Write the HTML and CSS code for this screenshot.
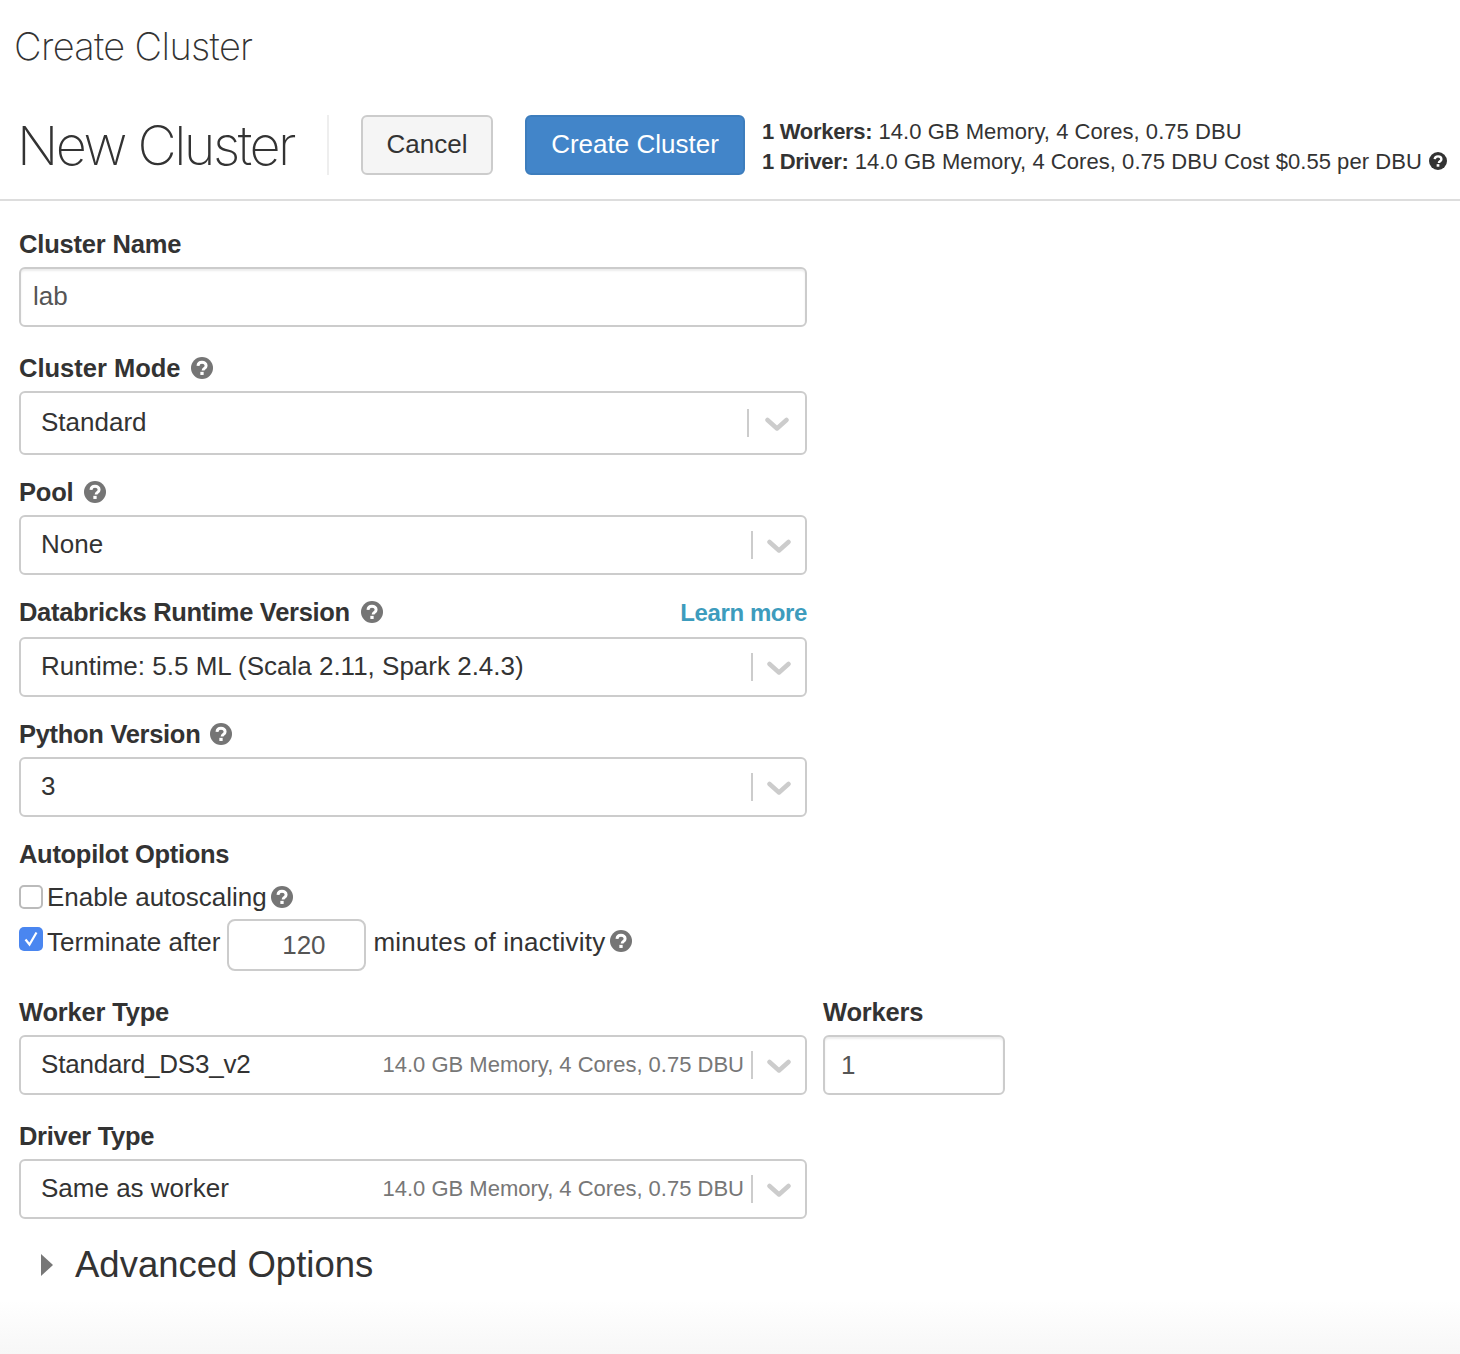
FILE: index.html
```html
<!DOCTYPE html>
<html lang="en">
<head>
  <meta charset="UTF-8" />
  <title>Create Cluster</title>
  <link rel="stylesheet" href="styles.css">
</head>
<body>
  <svg class="defs" width="0" height="0">
    <symbol id="help" viewBox="0 0 24 24">
      <circle cx="12" cy="12" r="12" fill="currentColor"/>
      <path d="M7.600 9.600c.2-2.400 2.100-3.800 4.400-3.800 2.500 0 4.500 1.500 4.500 3.700 0 3-3.300 2.800-3.300 5.100" fill="none" stroke="#fff" stroke-width="3.200"/>
      <rect x="10.200" y="16.200" width="3.600" height="3.400" fill="#fff"/>
    </symbol>
    <symbol id="chevron" viewBox="0 0 24 14">
      <path d="M2.500 3l9.500 8.500 9.500-8.500" fill="none" stroke="currentColor" stroke-width="4.500" stroke-linecap="round" stroke-linejoin="round"/>
    </symbol>
  </svg>

  <div class="page-title">Create Cluster</div>

  <div class="cluster-header">
    <h1>New Cluster</h1>
    <div class="divider"></div>
    <button class="btn">Cancel</button>
    <button class="btn btn-primary">Create Cluster</button>
    <div class="summary">
      <div><b>1 Workers:</b> 14.0 GB Memory, 4 Cores, 0.75 DBU</div>
      <div><b>1 Driver:</b> 14.0 GB Memory, 4 Cores, 0.75 DBU Cost $0.55 per DBU <svg class="help help-dark"><use href="#help"/></svg></div>
    </div>
  </div>

  <form class="cluster-form">
    <div class="field field-name">
      <label>Cluster Name</label>
      <input class="text-input" type="text" value="lab" />
    </div>

    <div class="field">
      <label class="label-wide">Cluster Mode <svg class="help help-closer"><use href="#help"/></svg></label>
      <div class="select select-tall">
        <span class="select-value">Standard</span>
        <span class="select-sep"></span>
        <svg class="chevron"><use href="#chevron"/></svg>
      </div>
    </div>

    <div class="field">
      <label>Pool <svg class="help help-near"><use href="#help"/></svg></label>
      <div class="select">
        <span class="select-value">None</span>
        <span class="select-sep"></span>
        <svg class="chevron"><use href="#chevron"/></svg>
      </div>
    </div>

    <div class="field">
      <div class="label-row">
        <label class="label-tight">Databricks Runtime Version <svg class="help help-near"><use href="#help"/></svg></label>
        <a class="learn-more" href="#">Learn more</a>
      </div>
      <div class="select">
        <span class="select-value">Runtime: 5.5 ML (Scala 2.11, Spark 2.4.3)</span>
        <span class="select-sep"></span>
        <svg class="chevron"><use href="#chevron"/></svg>
      </div>
    </div>

    <div class="field">
      <label class="label-tight">Python Version <svg class="help help-closer"><use href="#help"/></svg></label>
      <div class="select">
        <span class="select-value">3</span>
        <span class="select-sep"></span>
        <svg class="chevron"><use href="#chevron"/></svg>
      </div>
    </div>

    <div class="autopilot">
      <label class="label-tight">Autopilot Options</label>
      <div class="check-row">
        <span class="checkbox"></span>
        <span>Enable autoscaling</span>
        <svg class="help"><use href="#help"/></svg>
      </div>
      <div class="check-row check-row-terminate">
        <span class="checkbox checkbox-on">
          <svg viewBox="0 0 24 24"><path d="M6.500 12.500l4 5 7-12" fill="none" stroke="#fff" stroke-width="2.200"/></svg>
        </span>
        <span class="terminate-text">Terminate after</span>
        <input class="minutes-input" type="text" value="120" />
        <span class="terminate-text inactivity-text">minutes of inactivity</span>
        <svg class="help"><use href="#help"/></svg>
      </div>
    </div>

    <div class="worker-row">
      <div class="field worker-type">
        <label>Worker Type</label>
        <div class="select">
          <span class="select-value select-value-tight">Standard_DS3_v2</span>
          <span class="select-note">14.0 GB Memory, 4 Cores, 0.75 DBU</span>
          <span class="select-sep"></span>
          <svg class="chevron"><use href="#chevron"/></svg>
        </div>
      </div>
      <div class="field worker-count">
        <label>Workers</label>
        <input class="text-input workers-input" type="text" value="1" />
      </div>
    </div>

    <div class="field driver-field">
      <label class="label-tight">Driver Type</label>
      <div class="select">
        <span class="select-value">Same as worker</span>
        <span class="select-note">14.0 GB Memory, 4 Cores, 0.75 DBU</span>
        <span class="select-sep"></span>
        <svg class="chevron"><use href="#chevron"/></svg>
      </div>
    </div>

    <div class="advanced">
      <span class="caret"></span>
      <span>Advanced Options</span>
    </div>
  </form>

  <div class="page-fade"></div>
</body>
</html>
```

FILE: styles.css
```css
* {
  box-sizing: border-box;
}

body {
  margin: 0;
  height: 1354px;
  overflow: hidden;
  background: #fff;
  color: #333;
  font-family: "Liberation Sans", Arial, sans-serif;
  font-size: 26px;
}

.defs {
  position: absolute;
}

.page-title {
  height: 115px;
  padding: 21px 0 0 14px;
  font-family: Inter, sans-serif;
  font-size: 38px;
  font-weight: 200;
  line-height: 50px;
  letter-spacing: -0.650px;
}

.cluster-header {
  display: flex;
  height: 86px;
  padding-left: 19px;
  border-bottom: 2px solid #ddd;
}

h1 {
  width: 308px;
  height: 60px;
  margin: 0;
  font-family: Inter, sans-serif;
  font-size: 54px;
  font-weight: 200;
  line-height: 62px;
  letter-spacing: -2.500px;
  text-indent: -2px;
}

.divider {
  width: 2px;
  height: 60px;
  background: #eee;
  margin-right: 32px;
}

.btn {
  width: 132px;
  height: 60px;
  margin-right: 32px;
  border: 2px solid #ccc;
  border-radius: 6px;
  background: #f5f5f5;
  color: #333;
  font-family: inherit;
  font-size: 26px;
  padding: 0 0 2px;
}

.btn-primary {
  width: 220px;
  margin-right: 17px;
  border-color: #3d7dbd;
  background: #4285c9;
  color: #fff;
}

.summary {
  font-size: 22px;
  line-height: 30px;
  letter-spacing: 0.050px;
  white-space: nowrap;
  margin-top: 2px;
}

.summary b {
  letter-spacing: -0.300px;
}

.cluster-form {
  padding: 28px 0 0 19px;
  width: 807px;
}

.field {
  margin-bottom: 22px;
}

.field-name {
  margin-bottom: 26px;
}

label {
  display: block;
  height: 30px;
  line-height: 30px;
  margin-bottom: 8px;
  font-weight: 700;
  font-size: 25.500px;
  letter-spacing: -0.180px;
  white-space: nowrap;
}

.label-wide {
  letter-spacing: 0;
}

.label-tight {
  letter-spacing: -0.300px;
}

.help {
  display: inline-block;
  width: 22px;
  height: 22px;
  margin-left: 5px;
  vertical-align: -2px;
  color: #757575;
}

.help-near {
  margin-left: 4px;
}

.help-closer {
  margin-left: 3px;
}

.help-dark {
  width: 18px;
  height: 18px;
  margin-left: 1px;
  vertical-align: -1px;
  color: #333;
}

.text-input {
  display: block;
  width: 100%;
  height: 60px;
  padding: 0 12px 2px;
  border: 2px solid #ccc;
  border-radius: 6px;
  box-shadow: inset 0 2px 2px rgba(0, 0, 0, 0.075);
  color: #555;
  font-family: inherit;
  font-size: 26px;
}

.select {
  display: flex;
  align-items: center;
  height: 60px;
  padding: 0 14px 0 20px;
  border: 2px solid #ccc;
  border-radius: 6px;
}

.select-tall {
  height: 64px;
  padding-right: 16px;
}

.select-tall .chevron {
  margin-left: 16px;
}

.select-value {
  flex: 1;
  margin-bottom: 2px;
  white-space: nowrap;
}

.select-value-tight {
  letter-spacing: -0.200px;
}

.select-note {
  margin-right: 7px;
  color: #777;
  font-size: 22px;
  white-space: nowrap;
}

.select-sep {
  width: 2px;
  height: 28px;
  background: #ccc;
}

.chevron {
  width: 24px;
  height: 14px;
  margin-left: 14px;
  margin-top: 1px;
  color: #ccc;
}

.label-row {
  display: flex;
  justify-content: space-between;
  height: 40px;
}

.learn-more {
  margin-top: 1px;
  color: #3d9cbd;
  font-size: 24px;
  font-weight: 700;
  line-height: 30px;
  letter-spacing: -0.400px;
  text-decoration: none;
}

.autopilot label {
  margin-bottom: 13px;
}

.check-row {
  display: flex;
  align-items: center;
  height: 30px;
  white-space: nowrap;
}

.check-row .help {
  margin-left: 4px;
}

.check-row-terminate {
  height: 52px;
  margin-top: 7px;
}

.check-row-terminate .help {
  margin-bottom: 8px;
}

.terminate-text {
  margin-bottom: 6px;
}

.inactivity-text {
  letter-spacing: 0.250px;
}

.checkbox {
  display: block;
  width: 24px;
  height: 24px;
  margin-right: 4px;
  border: 2px solid #bbb;
  border-radius: 5px;
  background: #fff;
}

.checkbox-on {
  margin-bottom: 12px;
  border: 0;
  background: #4a86f0;
}

.checkbox svg {
  display: block;
  width: 24px;
  height: 24px;
}

.minutes-input {
  width: 139px;
  height: 52px;
  margin: 0 7px;
  border: 2px solid #ccc;
  border-radius: 8px;
  color: #555;
  font-family: inherit;
  font-size: 26px;
  text-align: center;
  padding: 0 0 0 14px;
}

.worker-row {
  display: flex;
  gap: 16px;
  margin-top: 26px;
}

.worker-row .field {
  margin-bottom: 26px;
}

.worker-type {
  width: 788px;
  flex: none;
}

.worker-count {
  width: 182px;
  flex: none;
}

.workers-input {
  padding: 0 16px;
}

.driver-field {
  margin-bottom: 23px;
}

.advanced {
  display: flex;
  align-items: center;
  gap: 22px;
  height: 46px;
  padding-left: 22px;
  font-size: 36.500px;
}

.caret {
  width: 0;
  height: 0;
  border-left: 12px solid #777;
  border-top: 11px solid transparent;
  border-bottom: 11px solid transparent;
}

.page-fade {
  position: absolute;
  left: 0;
  right: 0;
  bottom: 0;
  height: 54px;
  background: linear-gradient(#fff, #f7f7f7);
}
```
